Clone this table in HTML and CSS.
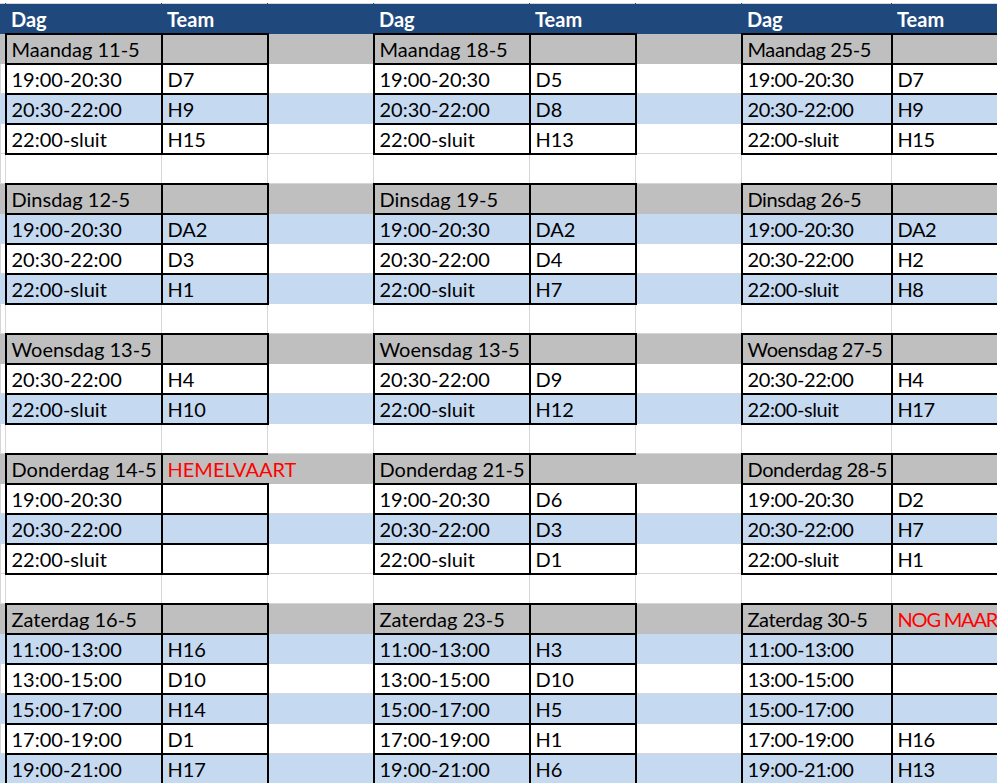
FILE: index.html
```html
<!DOCTYPE html>
<html lang="nl">
<head>
<meta charset="utf-8">
<title>Rooster</title>
<link rel="stylesheet" href="styles.css">
</head>
<body>
<table class="sheet">
<colgroup>
<col class="w-z"><col class="w-a"><col class="w-b"><col class="w-c"><col class="w-a"><col class="w-b"><col class="w-c"><col class="w-g"><col class="w-h">
</colgroup>
<tbody>
<tr class="head"><td class="z"></td><td>Dag</td><td>Team</td><td></td><td>Dag</td><td>Team</td><td></td><td>Dag</td><td>Team</td></tr>

<tr class="day"><td class="z"></td><td class="c">Maandag 11-5</td><td class="t"></td><td class="g"></td><td class="c">Maandag 18-5</td><td class="t"></td><td class="g"></td><td class="c n">Maandag 25-5</td><td class="t n"></td></tr>
<tr class="white"><td class="z"></td><td class="c">19:00-20:30</td><td class="t">D7</td><td class="g"></td><td class="c">19:00-20:30</td><td class="t">D5</td><td class="g"></td><td class="c n">19:00-20:30</td><td class="t n">D7</td></tr>
<tr class="blue"><td class="z"></td><td class="c">20:30-22:00</td><td class="t">H9</td><td class="g"></td><td class="c">20:30-22:00</td><td class="t">D8</td><td class="g"></td><td class="c n">20:30-22:00</td><td class="t n">H9</td></tr>
<tr class="white"><td class="z"></td><td class="c">22:00-sluit</td><td class="t">H15</td><td class="g"></td><td class="c">22:00-sluit</td><td class="t">H13</td><td class="g"></td><td class="c n">22:00-sluit</td><td class="t n">H15</td></tr>
<tr class="blank"><td class="z"></td><td></td><td></td><td></td><td></td><td></td><td></td><td></td><td></td></tr>

<tr class="day"><td class="z"></td><td class="c">Dinsdag 12-5</td><td class="t"></td><td class="g"></td><td class="c">Dinsdag 19-5</td><td class="t"></td><td class="g"></td><td class="c n">Dinsdag 26-5</td><td class="t n"></td></tr>
<tr class="blue"><td class="z"></td><td class="c">19:00-20:30</td><td class="t">DA2</td><td class="g"></td><td class="c">19:00-20:30</td><td class="t">DA2</td><td class="g"></td><td class="c n">19:00-20:30</td><td class="t n">DA2</td></tr>
<tr class="white"><td class="z"></td><td class="c">20:30-22:00</td><td class="t">D3</td><td class="g"></td><td class="c">20:30-22:00</td><td class="t">D4</td><td class="g"></td><td class="c n">20:30-22:00</td><td class="t n">H2</td></tr>
<tr class="blue"><td class="z"></td><td class="c">22:00-sluit</td><td class="t">H1</td><td class="g"></td><td class="c">22:00-sluit</td><td class="t">H7</td><td class="g"></td><td class="c n">22:00-sluit</td><td class="t n">H8</td></tr>
<tr class="blank"><td class="z"></td><td></td><td></td><td></td><td></td><td></td><td></td><td></td><td></td></tr>

<tr class="day"><td class="z"></td><td class="c">Woensdag 13-5</td><td class="t"></td><td class="g"></td><td class="c">Woensdag 13-5</td><td class="t"></td><td class="g"></td><td class="c n">Woensdag 27-5</td><td class="t n"></td></tr>
<tr class="white"><td class="z"></td><td class="c">20:30-22:00</td><td class="t">H4</td><td class="g"></td><td class="c">20:30-22:00</td><td class="t">D9</td><td class="g"></td><td class="c n">20:30-22:00</td><td class="t n">H4</td></tr>
<tr class="blue"><td class="z"></td><td class="c">22:00-sluit</td><td class="t">H10</td><td class="g"></td><td class="c">22:00-sluit</td><td class="t">H12</td><td class="g"></td><td class="c n">22:00-sluit</td><td class="t n">H17</td></tr>
<tr class="blank"><td class="z"></td><td></td><td></td><td></td><td></td><td></td><td></td><td></td><td></td></tr>

<tr class="day"><td class="z"></td><td class="c">Donderdag 14-5</td><td class="t open red">HEMELVAART</td><td class="g"></td><td class="c">Donderdag 21-5</td><td class="t open"></td><td class="g"></td><td class="c n">Donderdag 28-5</td><td class="t n open"></td></tr>
<tr class="white"><td class="z"></td><td class="c">19:00-20:30</td><td class="t"></td><td class="g"></td><td class="c">19:00-20:30</td><td class="t">D6</td><td class="g"></td><td class="c n">19:00-20:30</td><td class="t n">D2</td></tr>
<tr class="blue"><td class="z"></td><td class="c">20:30-22:00</td><td class="t"></td><td class="g"></td><td class="c">20:30-22:00</td><td class="t">D3</td><td class="g"></td><td class="c n">20:30-22:00</td><td class="t n">H7</td></tr>
<tr class="white"><td class="z"></td><td class="c">22:00-sluit</td><td class="t"></td><td class="g"></td><td class="c">22:00-sluit</td><td class="t">D1</td><td class="g"></td><td class="c n">22:00-sluit</td><td class="t n">H1</td></tr>
<tr class="blank"><td class="z"></td><td></td><td></td><td></td><td></td><td></td><td></td><td></td><td></td></tr>

<tr class="day"><td class="z"></td><td class="c">Zaterdag 16-5</td><td class="t"></td><td class="g"></td><td class="c">Zaterdag 23-5</td><td class="t"></td><td class="g"></td><td class="c n">Zaterdag 30-5</td><td class="t n red tight">NOG MAAR</td></tr>
<tr class="blue"><td class="z"></td><td class="c">11:00-13:00</td><td class="t">H16</td><td class="g"></td><td class="c">11:00-13:00</td><td class="t">H3</td><td class="g"></td><td class="c n">11:00-13:00</td><td class="t n"></td></tr>
<tr class="white"><td class="z"></td><td class="c">13:00-15:00</td><td class="t">D10</td><td class="g"></td><td class="c">13:00-15:00</td><td class="t">D10</td><td class="g"></td><td class="c n">13:00-15:00</td><td class="t n"></td></tr>
<tr class="blue"><td class="z"></td><td class="c">15:00-17:00</td><td class="t">H14</td><td class="g"></td><td class="c">15:00-17:00</td><td class="t">H5</td><td class="g"></td><td class="c n">15:00-17:00</td><td class="t n"></td></tr>
<tr class="white"><td class="z"></td><td class="c">17:00-19:00</td><td class="t">D1</td><td class="g"></td><td class="c">17:00-19:00</td><td class="t">H1</td><td class="g"></td><td class="c n">17:00-19:00</td><td class="t n">H16</td></tr>
<tr class="blue"><td class="z"></td><td class="c">19:00-21:00</td><td class="t">H17</td><td class="g"></td><td class="c">19:00-21:00</td><td class="t">H6</td><td class="g"></td><td class="c n">19:00-21:00</td><td class="t n">H13</td></tr>
</tbody>
</table>
</body>
</html>
```
FILE: styles.css
```css
html, body {
  margin: 0;
  padding: 0;
  background: #ffffff;
  overflow: hidden;
}

body {
  padding-top: 3px;
}

.sheet {
  border-collapse: collapse;
  table-layout: fixed;
  width: 1002px;
  font-family: Lato, "Open Sans", sans-serif;
  font-size: 20px;
  color: #000000;
}

.w-z { width: 5px; }
.w-a { width: 156px; }
.w-b { width: 106px; }
.w-c { width: 106px; }
.w-g { width: 150px; }
.w-h { width: 110px; }

.sheet tr {
  height: 30px;
}

.sheet td {
  padding: 0 0 2px 5px;
  border: 1px solid #d6d6d6;
  white-space: nowrap;
  overflow: visible;
  vertical-align: bottom;
  line-height: 24px;
  background: #ffffff;
}

.sheet td.z {
  padding: 0;
}

.sheet td.n {
  letter-spacing: -0.4px;
}

.sheet td.n.tight {
  letter-spacing: -1.2px;
}

.sheet tr.head td {
  background: #1f497d;
  border-color: #1f497d;
  border-top-color: #d6d6d6;
  color: #ffffff;
  font-weight: 700;
  padding-bottom: 2px;
}

.sheet tr.day td {
  background: #bfbfbf;
  border-color: #bfbfbf;
}

.sheet tr.blue td {
  background: #c5d9f1;
  border-color: #c5d9f1;
}

.sheet tr td.c,
.sheet tr td.t {
  border: 2px solid #000000;
}

.sheet tr td.t.open {
  border-right: 1px solid #bfbfbf;
}

.sheet td.red {
  color: #ff0000;
}
```
